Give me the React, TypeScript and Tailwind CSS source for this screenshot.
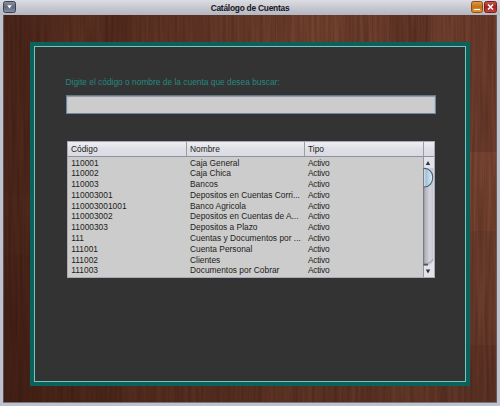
const rows: [string, string][] = [
  ["110001", "Caja General"],
  ["110002", "Caja Chica"],
  ["110003", "Bancos"],
  ["110003001", "Depositos en Cuentas Corri..."],
  ["110003001001", "Banco Agricola"],
  ["110003002", "Depositos en Cuentas de A..."],
  ["11000303", "Depositos a Plazo"],
  ["111", "Cuentas y Documentos por ..."],
  ["111001", "Cuenta Personal"],
  ["111002", "Clientes"],
  ["111003", "Documentos por Cobrar"],
];

// Wooden planks: [x, y, width, height, colour, opacity]
const planks: [number, number, number, number, string, number][] = [
  [0, 0, 27, 180, "#2e120a", 0.06],
  [0, 240, 27, 147, "#2e120a", 0.1],
  [48, 0, 52, 28, "#8a5841", 0.08],
  [100, 0, 28, 28, "#2e120a", 0.12],
  [206, 0, 68, 28, "#8a5841", 0.1],
  [289, 0, 52, 28, "#8a5841", 0.22],
  [386, 0, 42, 28, "#2e120a", 0.16],
  [467, 0, 27, 137, "#2e120a", 0.08],
  [467, 137, 27, 79, "#8a5038", 0.3],
  [467, 330, 27, 57, "#2e120a", 0.08],
  [127, 370, 70, 17, "#7a4630", 0.12],
  [388, 370, 36, 17, "#8a5038", 0.22],
];

function Wood() {
  return (
    <svg className="absolute inset-0 h-full w-full" viewBox="0 0 494 387" preserveAspectRatio="none">
      <defs>
        <linearGradient id="woodTone" x1="0" y1="0" x2="1" y2="0">
          <stop offset="0" stopColor="#4d271b" />
          <stop offset="0.25" stopColor="#5b3122" />
          <stop offset="0.6" stopColor="#6b3d2b" />
          <stop offset="1" stopColor="#714130" />
        </linearGradient>
        <linearGradient id="woodShade" x1="0" y1="0" x2="0" y2="1">
          <stop offset="0.5" stopColor="#220c05" stopOpacity="0" />
          <stop offset="1" stopColor="#220c05" stopOpacity="0.2" />
        </linearGradient>
        <filter id="grain" x="0" y="0" width="100%" height="100%" colorInterpolationFilters="sRGB">
          <feTurbulence type="fractalNoise" baseFrequency="0.35 0.012" numOctaves="2" seed="21" />
          <feColorMatrix values="0 0 0 0 0.12  0 0 0 0 0.04  0 0 0 0 0.02  0.5 0 0 0 -0.14" />
        </filter>
      </defs>
      <rect width="494" height="387" fill="url(#woodTone)" />
      {planks.map(([x, y, w, h, fill, opacity], i) => (
        <rect key={i} x={x} y={y} width={w} height={h} fill={fill} opacity={opacity} />
      ))}
      <rect width="494" height="387" filter="url(#grain)" />
      <rect width="494" height="387" fill="url(#woodShade)" />
      <path d="M0.5 0V387M493.5 0V387" stroke="#6d6870" strokeWidth="1" opacity="0.7" />
    </svg>
  );
}

function TitleBar() {
  return (
    <header className="flex h-[15px] shrink-0 items-start justify-between bg-gradient-to-b from-[#dcdde3] to-[#b3b5c0] pr-[3px] pl-[3px]">
      <div className="flex w-[28px] pt-[1px]">
        <svg width="13" height="12" viewBox="0 0 13 12">
          <defs>
            <linearGradient id="menuFill" x1="0" y1="0" x2="0" y2="1">
              <stop offset="0" stopColor="#8b919f" />
              <stop offset="0.5" stopColor="#626a7b" />
              <stop offset="1" stopColor="#8790a0" />
            </linearGradient>
          </defs>
          <rect x="0.5" y="0.5" width="12" height="11" rx="2" fill="url(#menuFill)" stroke="#394254" />
          <path d="M4.2 4.2H8.8L6.5 7.5Z" fill="#fff" />
        </svg>
      </div>
      <h1 className="pt-[3px] text-[8.4px] leading-[10px] font-bold tracking-[-0.24px] whitespace-nowrap text-[#17171b]">Catálogo de Cuentas</h1>
      <div className="flex w-[28px] justify-end gap-[1px] pt-[1px]">
        <svg width="12" height="12" viewBox="0 0 12 12">
          <defs>
            <linearGradient id="minFill" x1="0" y1="0" x2="0" y2="1">
              <stop offset="0" stopColor="#dc9a4e" />
              <stop offset="0.5" stopColor="#c87012" />
              <stop offset="1" stopColor="#e39a37" />
            </linearGradient>
          </defs>
          <rect x="0.5" y="0.5" width="11" height="11" rx="2" fill="url(#minFill)" stroke="#8d4c12" />
          <path d="M3 8.5H9" stroke="#fff" strokeWidth="1.1" />
        </svg>
        <svg width="13" height="12" viewBox="0 0 13 12">
          <defs>
            <linearGradient id="closeFill" x1="0" y1="0" x2="0" y2="1">
              <stop offset="0" stopColor="#c45b55" />
              <stop offset="0.5" stopColor="#a51d1a" />
              <stop offset="1" stopColor="#c44a3d" />
            </linearGradient>
          </defs>
          <rect x="0.5" y="0.5" width="12" height="11" rx="2" fill="url(#closeFill)" stroke="#7c1c1e" />
          <path d="M4 3.5L9 8.5M9 3.5L4 8.5" stroke="#fff" strokeWidth="1.6" />
        </svg>
      </div>
    </header>
  );
}

function ScrollBar() {
  return (
    <svg className="block shrink-0" width="11" height="120" viewBox="0 0 11 120">
      <defs>
        <linearGradient id="track" x1="0" y1="0" x2="1" y2="0">
          <stop offset="0" stopColor="#85868e" />
          <stop offset="0.25" stopColor="#b6b7c0" />
          <stop offset="0.65" stopColor="#d3d4dc" />
          <stop offset="1" stopColor="#c4c5ce" />
        </linearGradient>
        <linearGradient id="thumb" x1="0" y1="0" x2="1" y2="0">
          <stop offset="0" stopColor="#eaf3f8" />
          <stop offset="0.3" stopColor="#a3bfd3" />
          <stop offset="1" stopColor="#d9f2ff" />
        </linearGradient>
        <clipPath id="barClip">
          <rect width="11" height="120" />
        </clipPath>
      </defs>
      <g clipPath="url(#barClip)">
        <rect width="11" height="120" fill="#e2e3e9" />
        <path d="M0 11H10.5V102Q10 108 4 108.5H0Z" fill="url(#track)" />
        <path d="M0 106Q7 108 10 102" fill="none" stroke="#8c8d95" strokeWidth="0.8" />
        <path d="M0 107.7H5" stroke="#55565c" strokeWidth="1.6" />
        <path d="M0 11.5C13 10 13 31 0 30Z" fill="url(#thumb)" stroke="#465d70" strokeWidth="1.1" />
        <path d="M2.8 8L5 4L7.2 8Z" fill="#303036" />
        <path d="M2.8 112.5L5 116.5L7.2 112.5Z" fill="#303036" />
        <path d="M0.4 0V120" stroke="#74757c" strokeWidth="0.8" />
      </g>
    </svg>
  );
}

function AccountsTable() {
  return (
    <div className="mt-[27px] ml-[1px] flex h-[137px] w-[368px] flex-col border border-[#a8abb5] bg-[#cccccc] text-[8.4px] text-[#1d1d20]">
      <div className="flex h-[15px] shrink-0 border-b border-[#8f929d] bg-gradient-to-b from-[#eeeff3] via-[#dfe0e6] to-[#d9dae3] leading-[14px]">
        <div className="w-[119px] border-r border-[#9b9da7] pl-[3px]">Código</div>
        <div className="w-[118px] border-r border-[#9b9da7] pl-[3px]">Nombre</div>
        <div className="w-[119px] border-r border-[#9b9da7] pl-[3px]">Tipo</div>
      </div>
      <div className="flex h-[120px]">
        <div className="flex w-[355px] flex-col pt-[0.5px]">
          {rows.map(([code, name]) => (
            <div key={code} className="flex h-[10.8px] shrink-0 leading-[10.8px] whitespace-nowrap">
              <span className="w-[119px] pl-[3.3px]">{code}</span>
              <span className="w-[118px] pl-[3px]">{name}</span>
              <span className="pl-[3px] tracking-[-0.25px]">Activo</span>
            </div>
          ))}
        </div>
        <ScrollBar />
      </div>
    </div>
  );
}

export default function App() {
  return (
    <div className="flex h-[406px] w-[500px] flex-col overflow-hidden bg-[#bfc1cc] font-['Liberation_Sans',Arial,sans-serif]">
      <TitleBar />
      <div className="relative mx-[3px] h-[388px] shrink-0 border-b border-[#73757f]">
        <Wood />
        <main className="relative flex h-full px-[27px] pt-[27px] pb-[16px]">
          <div className="w-[440px] border-4 border-[#0b625d]">
            <div className="h-full border border-[#7cc4bc] bg-[#333333] pl-[31px]">
              <label htmlFor="search" className="mt-[30px] -ml-[0.5px] block h-[10px] text-[8.38px] leading-[10px] whitespace-nowrap text-[#248a80]">
                Digite el código o nombre de la cuenta que desea buscar:
              </label>
              <input
                id="search"
                className="mt-[8px] block h-[19px] w-[370px] border border-[#6f88a0] border-t-[#65788b] bg-[#cccccc] px-1 text-[8.4px] shadow-[inset_0_1px_0_#8f9aa6,inset_1px_0_0_#b4c4d4,inset_-1px_0_0_#b4c4d4] outline-none"
              />
              <AccountsTable />
            </div>
          </div>
        </main>
      </div>
    </div>
  );
}
